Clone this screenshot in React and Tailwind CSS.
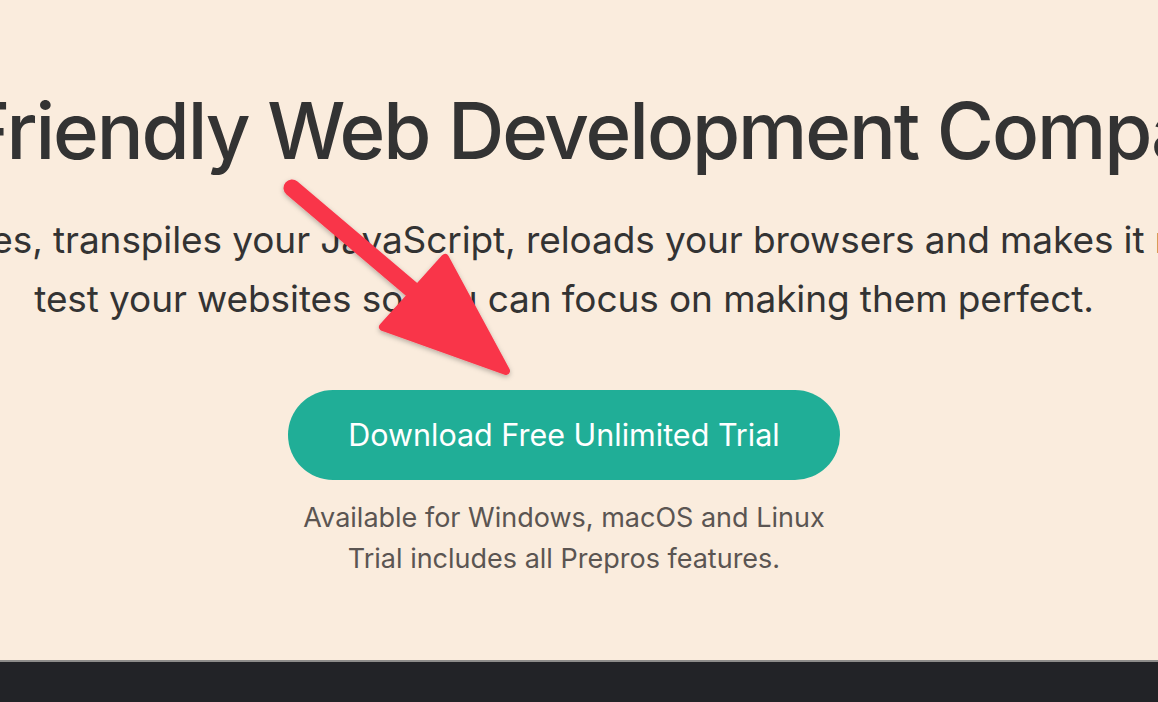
export default function App() {
  return (
    <div className="relative w-[1158px] h-[702px] overflow-hidden bg-[#faecdd]" style={{ fontFamily: 'Inter, "Noto Sans", sans-serif' }}>
      <section className="h-[660px] w-full overflow-hidden">
        <div className="w-[1128px] flex flex-col items-center pt-[84px]">
          <h1 className="whitespace-nowrap text-[78px] leading-[1.2] font-medium text-[#333333] tracking-[-2.1px]">
            Your Friendly Web Development Companion
          </h1>
          <p className="mt-[32px] whitespace-nowrap text-center text-[37px] leading-[59px] text-[#333333] tracking-[-0.1px]">
            Prepros compiles your files, transpiles your JavaScript, reloads your browsers and makes it really easy to develop &amp;
            <br />
            test your websites so you can focus on making them perfect.
          </p>
          <button className="mt-[62px] w-[552px] h-[90px] rounded-full bg-[#20ae97] text-white text-[30.5px] font-normal flex items-center justify-center">
            Download Free Unlimited Trial
          </button>
          <div className="mt-[17px] text-center text-[27px] leading-[41px] text-[#5b5552]">
            <div>Available for Windows, macOS and Linux</div>
            <div>Trial includes all Prepros features.</div>
          </div>
        </div>
      </section>
      <div className="h-[2px] bg-[#8d8c8a]" />
      <div className="h-[40px] bg-[#222327]" />

      <svg className="absolute left-0 top-0 pointer-events-none" width="1158" height="702" viewBox="0 0 1158 702">
        <defs>
          <filter id="sh" x="-20%" y="-20%" width="140%" height="140%">
            <feDropShadow dx="0" dy="2" stdDeviation="2.5" floodColor="#000" floodOpacity="0.28" />
          </filter>
        </defs>
        <g filter="url(#sh)" fill="#f9354a" stroke="#f9354a" strokeLinejoin="round" strokeLinecap="round">
          <line x1="292" y1="188" x2="430" y2="305" strokeWidth="17" />
          <polygon points="445,258 383,327 506,371" strokeWidth="8" />
        </g>
      </svg>
    </div>
  );
}
